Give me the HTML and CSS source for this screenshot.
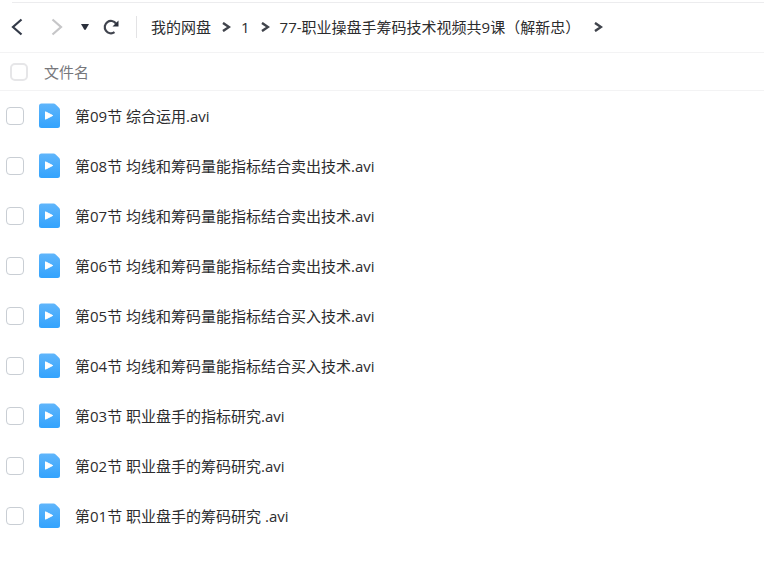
FILE: index.html
```html
<!DOCTYPE html>
<html lang="zh-CN">
<head>
  <meta charset="UTF-8">
  <meta name="viewport" content="width=device-width, initial-scale=1.0">
  <link rel="stylesheet" href="styles.css">
  <title>我的网盘</title>
</head>
<body>
<svg class="defs" aria-hidden="true">
  <symbol id="video" viewBox="0 0 22 26">
    <linearGradient id="blue" x1="0" y1="0" x2="0" y2="1">
      <stop offset="0" stop-color="#5fb5fb"/>
      <stop offset="1" stop-color="#33a3fd"/>
    </linearGradient>
    <path fill="url(#blue)" d="M2.500 .5H14.500Q15.800 .5 16.700 1.400L20 4.700Q21 5.700 21 7V22.500Q21 25 18.500 25H2.500Q0 25 0 22.500V3Q0 .5 2.500 .5Z"/>
    <path fill="#fff" stroke="#fff" stroke-linejoin="round" d="M6.500 8.800L13.700 12.500L6.500 16.200Z"/>
  </symbol>
  <symbol id="arrow" viewBox="0 0 9 10">
    <path fill="none" stroke="#40444c" stroke-width="2.400" d="M1 .9L7 5L1 9.100"/>
  </symbol>
</svg>
<header class="toolbar">
  <div class="nav">
    <button class="back" type="button" aria-label="后退"><svg width="12" height="18" viewBox="0 0 12 18"><path fill="none" stroke="#333a48" stroke-width="2.200" d="M10.500 1.500L2 9L10.500 16.500"/></svg></button>
    <button class="forward" type="button" aria-label="前进"><svg width="12" height="18" viewBox="0 0 12 18"><path fill="none" stroke="#c6c6c8" stroke-width="2.200" d="M1.500 1.500L10 9L1.500 16.500"/></svg></button>
    <button class="history" type="button" aria-label="历史"><svg width="8" height="6" viewBox="0 0 8 6"><path fill="#2b303c" d="M0 0H8L4.800 5.500Q4 6.300 3.200 5.500Z"/></svg></button>
    <button class="refresh" type="button" aria-label="刷新"><svg width="16" height="16" viewBox="0 0 16 16"><path fill="none" stroke="#40444e" stroke-width="2.200" d="M11.500 13.200A6.200 6.200 0 1 1 13 4.500"/><path fill="#2b303c" d="M15.500 1.500V7.500H9.500Z"/></svg></button>
  </div>
  <nav class="crumbs">
    <a href="#">我的网盘</a>
    <svg class="sep"><use href="#arrow"/></svg>
    <a href="#">1</a>
    <svg class="sep"><use href="#arrow"/></svg>
    <a href="#">77-职业操盘手筹码技术视频共9课（解新忠）</a>
    <svg class="sep end"><use href="#arrow"/></svg>
  </nav>
</header>
<div class="list-head">
  <input type="checkbox" id="all">
  <label for="all">文件名</label>
</div>
<ul class="files">
  <li><input type="checkbox" id="f9"><svg class="icon"><use href="#video"/></svg><label for="f9">第09节 综合运用.avi</label></li>
  <li><input type="checkbox" id="f8"><svg class="icon"><use href="#video"/></svg><label for="f8">第08节 均线和筹码量能指标结合卖出技术.avi</label></li>
  <li><input type="checkbox" id="f7"><svg class="icon"><use href="#video"/></svg><label for="f7">第07节 均线和筹码量能指标结合卖出技术.avi</label></li>
  <li><input type="checkbox" id="f6"><svg class="icon"><use href="#video"/></svg><label for="f6">第06节 均线和筹码量能指标结合卖出技术.avi</label></li>
  <li><input type="checkbox" id="f5"><svg class="icon"><use href="#video"/></svg><label for="f5">第05节 均线和筹码量能指标结合买入技术.avi</label></li>
  <li><input type="checkbox" id="f4"><svg class="icon"><use href="#video"/></svg><label for="f4">第04节 均线和筹码量能指标结合买入技术.avi</label></li>
  <li><input type="checkbox" id="f3"><svg class="icon"><use href="#video"/></svg><label for="f3">第03节 职业盘手的指标研究.avi</label></li>
  <li><input type="checkbox" id="f2"><svg class="icon"><use href="#video"/></svg><label for="f2">第02节 职业盘手的筹码研究.avi</label></li>
  <li><input type="checkbox" id="f1"><svg class="icon"><use href="#video"/></svg><label for="f1">第01节 职业盘手的筹码研究 .avi</label></li>
</ul>
</body>
</html>
```
FILE: styles.css
```css
* {
  box-sizing: border-box;
}
body {
  margin: 0;
  padding-top: 2px;
  background: #fff;
  color: #2c2c2e;
  font: 15px/20px "Open Sans", "Noto Sans CJK SC", sans-serif;
}
.defs {
  position: absolute;
  width: 0;
  height: 0;
}
svg {
  display: block;
  flex: none;
}
.toolbar {
  display: flex;
  align-items: center;
  height: 51px;
  padding-left: 11px;
  border-bottom: 1px solid #f3f3f4;
  background: linear-gradient(#ececee, #ececee) 12px 0 / 100% 1px no-repeat;
}
.nav {
  display: flex;
  align-items: center;
  height: 22px;
  padding-right: 17px;
  border-right: 1px solid #e3e3e5;
}
button {
  padding: 0;
  border: 0;
  background: none;
}
.forward {
  margin-left: 28px;
}
.history {
  margin-left: 18px;
}
.refresh {
  margin-left: 14px;
}
.crumbs {
  display: flex;
  align-items: center;
  margin-left: 14px;
  white-space: nowrap;
}
.crumbs a {
  color: inherit;
  text-decoration: none;
}
.sep {
  width: 9px;
  height: 10px;
  margin: 0 10px 0 11px;
}
.end {
  margin-left: 14px;
}
input[type="checkbox"] {
  appearance: none;
  flex: none;
  width: 18px;
  height: 18px;
  margin: 0;
  border: 1px solid #c9ced4;
  border-radius: 4px;
  background: #fff;
}
input[type="checkbox"]:checked {
  background: #33a3fd;
}
.list-head {
  display: flex;
  align-items: center;
  gap: 16px;
  height: 38px;
  padding-left: 10px;
  border-bottom: 1px solid #f3f3f4;
  color: #77777b;
}
.list-head input[type="checkbox"] {
  border: 2px solid #e6e6e8;
  border-radius: 5px;
}
.files {
  margin: 0;
  padding: 0;
  list-style: none;
}
.files li {
  display: flex;
  align-items: center;
  height: 50px;
  padding-left: 6px;
}
.icon {
  width: 22px;
  height: 26px;
  margin: 0 14px 0 15px;
}
```
